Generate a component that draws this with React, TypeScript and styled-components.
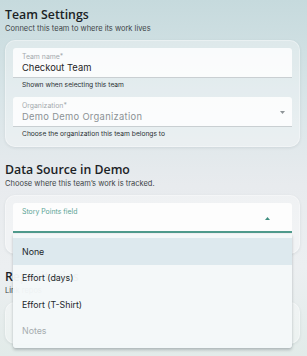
import React from 'react';
import styled, { createGlobalStyle } from 'styled-components';

const GlobalStyle = createGlobalStyle`
  html, body {
    margin: 0;
    padding: 0;
  }
  body {
    font-family: Inter, "Liberation Sans", sans-serif;
    color: #1f2426;
  }
`;

const Page = styled.div`
  position: relative;
  width: 307px;
  height: 356px;
  overflow: hidden;
  box-sizing: border-box;
  padding: 7px 7px 0 5px;
  background: linear-gradient(180deg, #c6dadd 0%, #d9e5e8 28%, #e8ebee 52%, #eceff1 75%, #e2ebe9 100%);
`;

const Section = styled.section`
  display: flex;
  flex-direction: column;
  margin-bottom: 15px;
`;

const Heading = styled.h2`
  margin: 0;
  height: 16px;
  font-family: "Open Sans", sans-serif;
  font-weight: 600;
  font-size: 12.3px;
  line-height: 16px;
  color: #1b2225;
`;

const Sub = styled.p`
  margin: 0 0 5px;
  height: 12px;
  font-size: 7.5px;
  line-height: 12px;
  color: #3d4447;
`;

const Card = styled.div<{ $minHeight?: number }>`
  position: relative;
  box-sizing: border-box;
  min-height: ${p => p.$minHeight ?? 0}px;
  padding: 8px 8px 1px;
  border-radius: 10px;
  background: rgba(255, 255, 255, 0.32);
  box-shadow: 0 1px 3px rgba(40, 60, 70, 0.1), inset 0 0 0 1px rgba(255, 255, 255, 0.35);
  display: flex;
  flex-direction: column;
`;

const Field = styled.div<{ $focused?: boolean }>`
  position: relative;
  box-sizing: border-box;
  height: 30px;
  padding: 4px 9px 0;
  background: rgba(255, 255, 255, 0.82);
  border-radius: 3px 3px 0 0;
  border-bottom: ${p => (p.$focused ? '2px solid #4f9a8c' : '1px solid #c9cfd2')};
  display: flex;
  flex-direction: column;
`;

const Label = styled.span<{ $focused?: boolean }>`
  font-size: 6.9px;
  line-height: 9px;
  color: ${p => (p.$focused ? '#5aa394' : '#a4aaad')};
`;

const Value = styled.span<{ $disabled?: boolean }>`
  font-size: 9.4px;
  line-height: 14px;
  letter-spacing: ${p => (p.$disabled ? '0.3px' : '0')};
  color: ${p => (p.$disabled ? '#8c9295' : '#1f2426')};
`;

const Helper = styled.span`
  padding: 0 9px;
  margin: 3px 0 7px;
  font-size: 6.7px;
  line-height: 9px;
  color: #2b3134;
`;

const Caret = styled.svg<{ $right: number; $top: number }>`
  position: absolute;
  right: ${p => p.$right}px;
  top: ${p => p.$top}px;
  width: 5px;
  height: 3px;
`;

const Menu = styled.ul`
  position: absolute;
  left: 8px;
  right: 8px;
  top: 39px;
  margin: 0;
  padding: 4px 0;
  list-style: none;
  background: rgba(244, 248, 249, 0.97);
  border-radius: 0 0 3px 3px;
  box-shadow: 0 2px 3px rgba(30, 40, 50, 0.25), 0 0 1px rgba(30, 40, 50, 0.15);
  z-index: 2;
`;

const Item = styled.li<{ $selected?: boolean; $disabled?: boolean }>`
  height: 26.5px;
  display: flex;
  align-items: center;
  padding: 0 9px;
  font-size: 8.8px;
  color: ${p => (p.$disabled ? '#a6acaf' : '#22282b')};
  background: ${p => (p.$selected ? '#dde9ee' : 'transparent')};
`;

const options = [
  { label: 'None', selected: true },
  { label: 'Effort (days)' },
  { label: 'Effort (T-Shirt)' },
  { label: 'Notes', disabled: true },
];

export default function App() {
  return (
    <Page>
      <GlobalStyle />
      <Section>
        <Heading>Team Settings</Heading>
        <Sub>Connect this team to where its work lives</Sub>
        <Card>
          <Field>
            <Label>Team name*</Label>
            <Value>Checkout Team</Value>
          </Field>
          <Helper>Shown when selecting this team</Helper>
          <Field>
            <Label>Organization*</Label>
            <Value $disabled>Demo Demo Organization</Value>
            <Caret $right={7} $top={14} viewBox="0 0 10 6">
              <path d="M0 0 L5 6 L10 0 Z" fill="#8e9497" />
            </Caret>
          </Field>
          <Helper>Choose the organization this team belongs to</Helper>
        </Card>
      </Section>

      <Section>
        <Heading>Data Source in Demo</Heading>
        <Sub>Choose where this team’s work is tracked.</Sub>
        <Card $minHeight={59}>
          <Field $focused>
            <Label $focused>Story Points field</Label>
            <Caret $right={22} $top={14} viewBox="0 0 10 6">
              <path d="M0 6 L5 0 L10 6 Z" fill="#3f8f80" />
            </Caret>
          </Field>
          <Menu>
            {options.map(o => (
              <Item key={o.label} $selected={o.selected} $disabled={o.disabled}>
                {o.label}
              </Item>
            ))}
          </Menu>
        </Card>
      </Section>

      <Section>
        <Heading>Repositories</Heading>
        <Sub>Link repos</Sub>
        <Card $minHeight={42} />
      </Section>
    </Page>
  );
}
